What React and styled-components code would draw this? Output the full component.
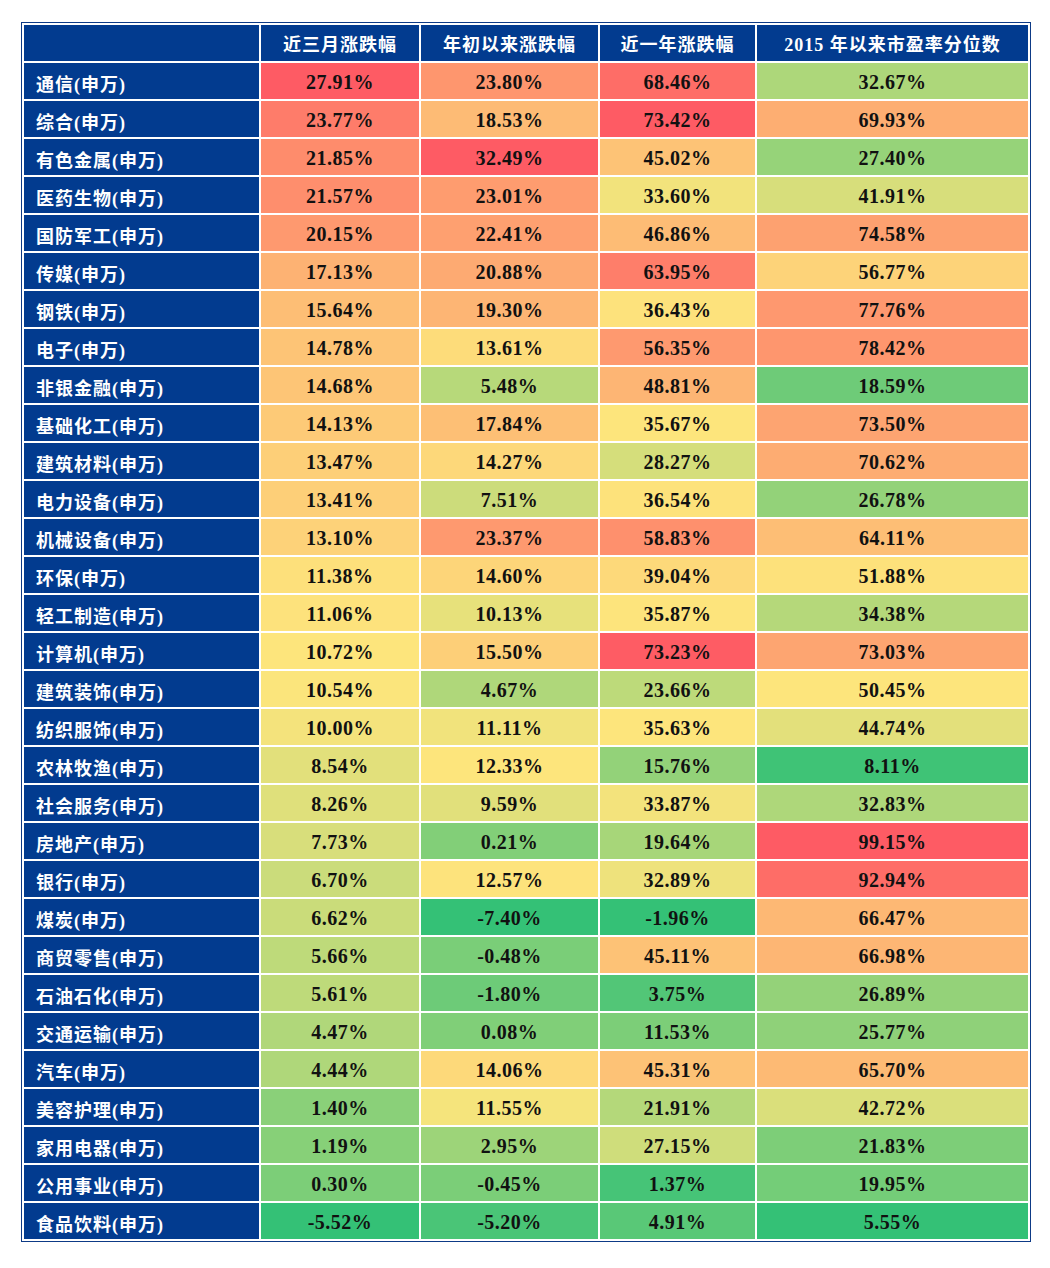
import React from "react";
import styled, { createGlobalStyle } from "styled-components";

const GlobalStyle = createGlobalStyle`
  body {
    margin: 0;
    background: #ffffff;
  }
`;

const columns = ["近三月涨跌幅", "年初以来涨跌幅", "近一年涨跌幅", "2015 年以来市盈率分位数"];
const widths = [235, 158, 177, 155, 271];

const rows = [
  ["通信", 27.91, 23.8, 68.46, 32.67],
  ["综合", 23.77, 18.53, 73.42, 69.93],
  ["有色金属", 21.85, 32.49, 45.02, 27.4],
  ["医药生物", 21.57, 23.01, 33.6, 41.91],
  ["国防军工", 20.15, 22.41, 46.86, 74.58],
  ["传媒", 17.13, 20.88, 63.95, 56.77],
  ["钢铁", 15.64, 19.3, 36.43, 77.76],
  ["电子", 14.78, 13.61, 56.35, 78.42],
  ["非银金融", 14.68, 5.48, 48.81, 18.59],
  ["基础化工", 14.13, 17.84, 35.67, 73.5],
  ["建筑材料", 13.47, 14.27, 28.27, 70.62],
  ["电力设备", 13.41, 7.51, 36.54, 26.78],
  ["机械设备", 13.1, 23.37, 58.83, 64.11],
  ["环保", 11.38, 14.6, 39.04, 51.88],
  ["轻工制造", 11.06, 10.13, 35.87, 34.38],
  ["计算机", 10.72, 15.5, 73.23, 73.03],
  ["建筑装饰", 10.54, 4.67, 23.66, 50.45],
  ["纺织服饰", 10.0, 11.11, 35.63, 44.74],
  ["农林牧渔", 8.54, 12.33, 15.76, 8.11],
  ["社会服务", 8.26, 9.59, 33.87, 32.83],
  ["房地产", 7.73, 0.21, 19.64, 99.15],
  ["银行", 6.7, 12.57, 32.89, 92.94],
  ["煤炭", 6.62, -7.4, -1.96, 66.47],
  ["商贸零售", 5.66, -0.48, 45.11, 66.98],
  ["石油石化", 5.61, -1.8, 3.75, 26.89],
  ["交通运输", 4.47, 0.08, 11.53, 25.77],
  ["汽车", 4.44, 14.06, 45.31, 65.7],
  ["美容护理", 1.4, 11.55, 21.91, 42.72],
  ["家用电器", 1.19, 2.95, 27.15, 21.83],
  ["公用事业", 0.3, -0.45, 1.37, 19.95],
  ["食品饮料", -5.52, -5.2, 4.91, 5.55],
];

const RED = [254, 91, 100];
const YELLOW = [253, 229, 124];
const GREEN = [52, 193, 118];

const mix = (a, b, t) => a.map((v, i) => Math.round(v + (b[i] - v) * t));

// Excel-like three colour scale: min green, median yellow, max red
const scales = [1, 2, 3, 4].map((c) => {
  const vals = rows.map((r) => r[c]).sort((a, b) => a - b);
  return { min: vals[0], mid: vals[Math.floor(vals.length / 2)], max: vals[vals.length - 1] };
});

const heat = (v, c) => {
  const { min, mid, max } = scales[c];
  const rgb = v <= mid ? mix(GREEN, YELLOW, (v - min) / (mid - min)) : mix(YELLOW, RED, (v - mid) / (max - mid));
  return `rgb(${rgb.join(",")})`;
};

function App() {
  return (
    <Page>
      <GlobalStyle />
      <Table>
        <colgroup>
          {widths.map((w, i) => (
            <col key={i} style={{ width: w }} />
          ))}
        </colgroup>
        <thead>
          <tr>
            <HeadCell />
            {columns.map((c) => (
              <HeadCell key={c}>{c}</HeadCell>
            ))}
          </tr>
        </thead>
        <tbody>
          {rows.map(([name, ...vals]) => (
            <tr key={name}>
              <NameCell>{name}(申万)</NameCell>
              {vals.map((v, i) => (
                <ValueCell key={i} $bg={heat(v, i)}>
                  {v.toFixed(2)}%
                </ValueCell>
              ))}
            </tr>
          ))}
        </tbody>
      </Table>
    </Page>
  );
}

const Page = styled.div`
  padding: 22px 0 0 21px;
`;

const Table = styled.table`
  width: 1010px;
  table-layout: fixed;
  border-collapse: separate;
  border-spacing: 2px;
  border: 1px solid #0d3a86;
  font-family: "Liberation Serif", "Noto Sans CJK SC", serif;
  font-weight: 700;
`;

const HeadCell = styled.th`
  height: 36px;
  padding: 0;
  background: #023b8f;
  color: #ffffff;
  font-size: 18px;
  letter-spacing: 1px;
  text-align: center;
  vertical-align: middle;
`;

const NameCell = styled.td`
  height: 36px;
  box-sizing: border-box;
  padding: 3px 0 0 12px;
  background: #023b8f;
  color: #ffffff;
  font-size: 18px;
  letter-spacing: 1px;
  white-space: nowrap;
  vertical-align: middle;
`;

const ValueCell = styled.td`
  height: 36px;
  box-sizing: border-box;
  padding: 3px 0 0;
  background: ${(p) => p.$bg};
  color: #111111;
  font-size: 20px;
  letter-spacing: 0.5px;
  text-align: center;
  vertical-align: middle;
`;

export default App;
